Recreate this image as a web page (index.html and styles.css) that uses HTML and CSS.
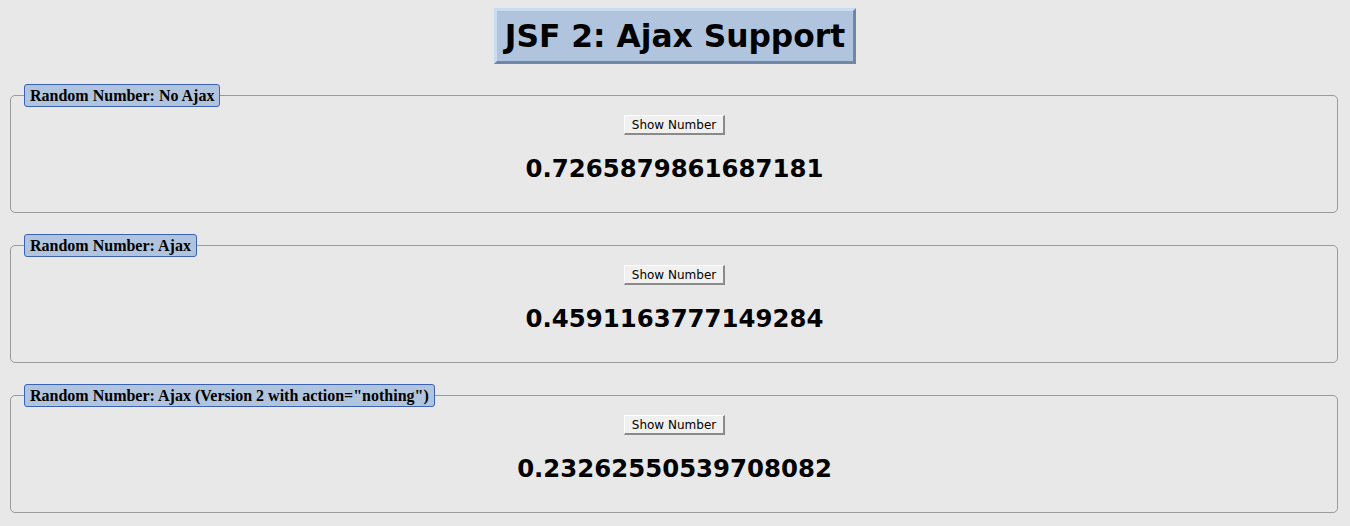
FILE: index.html
```html
<!DOCTYPE html>
<html>
<head>
<meta charset="utf-8">
<title>JSF 2: Ajax Support</title>
<link rel="stylesheet" href="styles.css">
</head>
<body>
<h1 class="title">JSF 2: Ajax Support</h1>
<fieldset class="box">
  <legend class="box-legend">Random Number: No Ajax</legend>
  <div class="row"><button class="btn" type="button">Show Number</button></div>
  <h2 class="num">0.7265879861687181</h2>
</fieldset>
<fieldset class="box">
  <legend class="box-legend">Random Number: Ajax</legend>
  <div class="row"><button class="btn" type="button">Show Number</button></div>
  <h2 class="num">0.4591163777149284</h2>
</fieldset>
<fieldset class="box">
  <legend class="box-legend">Random Number: Ajax (Version 2 with action="nothing")</legend>
  <div class="row"><button class="btn" type="button">Show Number</button></div>
  <h2 class="num">0.23262550539708082</h2>
</fieldset>
</body>
</html>
```
FILE: styles.css
```css
html, body {
  background: #e8e8e8;
}
body {
  margin: 8px;
  font-family: "DejaVu Sans", Verdana, sans-serif;
  color: #000;
}
.title {
  display: table;
  margin: 0 auto 20px;
  padding: 6px 8px;
  font-size: 31.3px;
  line-height: 38px;
  font-weight: bold;
  background: #b0c4de;
  border-style: solid;
  border-width: 3px;
  border-color: #c9dcf2 #6f87a9 #6f87a9 #c9dcf2;
}
.box {
  margin: 0 4px 21px 2px;
  padding: 8px 12px 29px 13px;
  border: 1px solid #9a9a9a;
  border-radius: 5px;
}
.box-legend {
  font-family: "Liberation Serif", "Times New Roman", serif;
  font-weight: bold;
  font-size: 16px;
  line-height: 20px;
  padding: 1px 5px 0 5px;
  background: #b0c4de;
  border: 1px solid #3c62b4;
  border-radius: 3px;
}
.row {
  display: flex;
  justify-content: center;
}
.btn {
  font-family: "DejaVu Sans", Tahoma, sans-serif;
  font-size: 12px;
  height: 20px;
  width: 101px;
  padding: 0 4px;
  background: #f0f0f0;
  color: #000;
  border-style: solid;
  border-width: 1px 2px 2px 1px;
  border-color: #ffffff #8a8a8a #8a8a8a #ffffff;
  border-radius: 0;
}
.num {
  margin: 20px 0 0;
  text-align: center;
  font-size: 24.4px;
  line-height: 28px;
  font-weight: bold;
}
```
